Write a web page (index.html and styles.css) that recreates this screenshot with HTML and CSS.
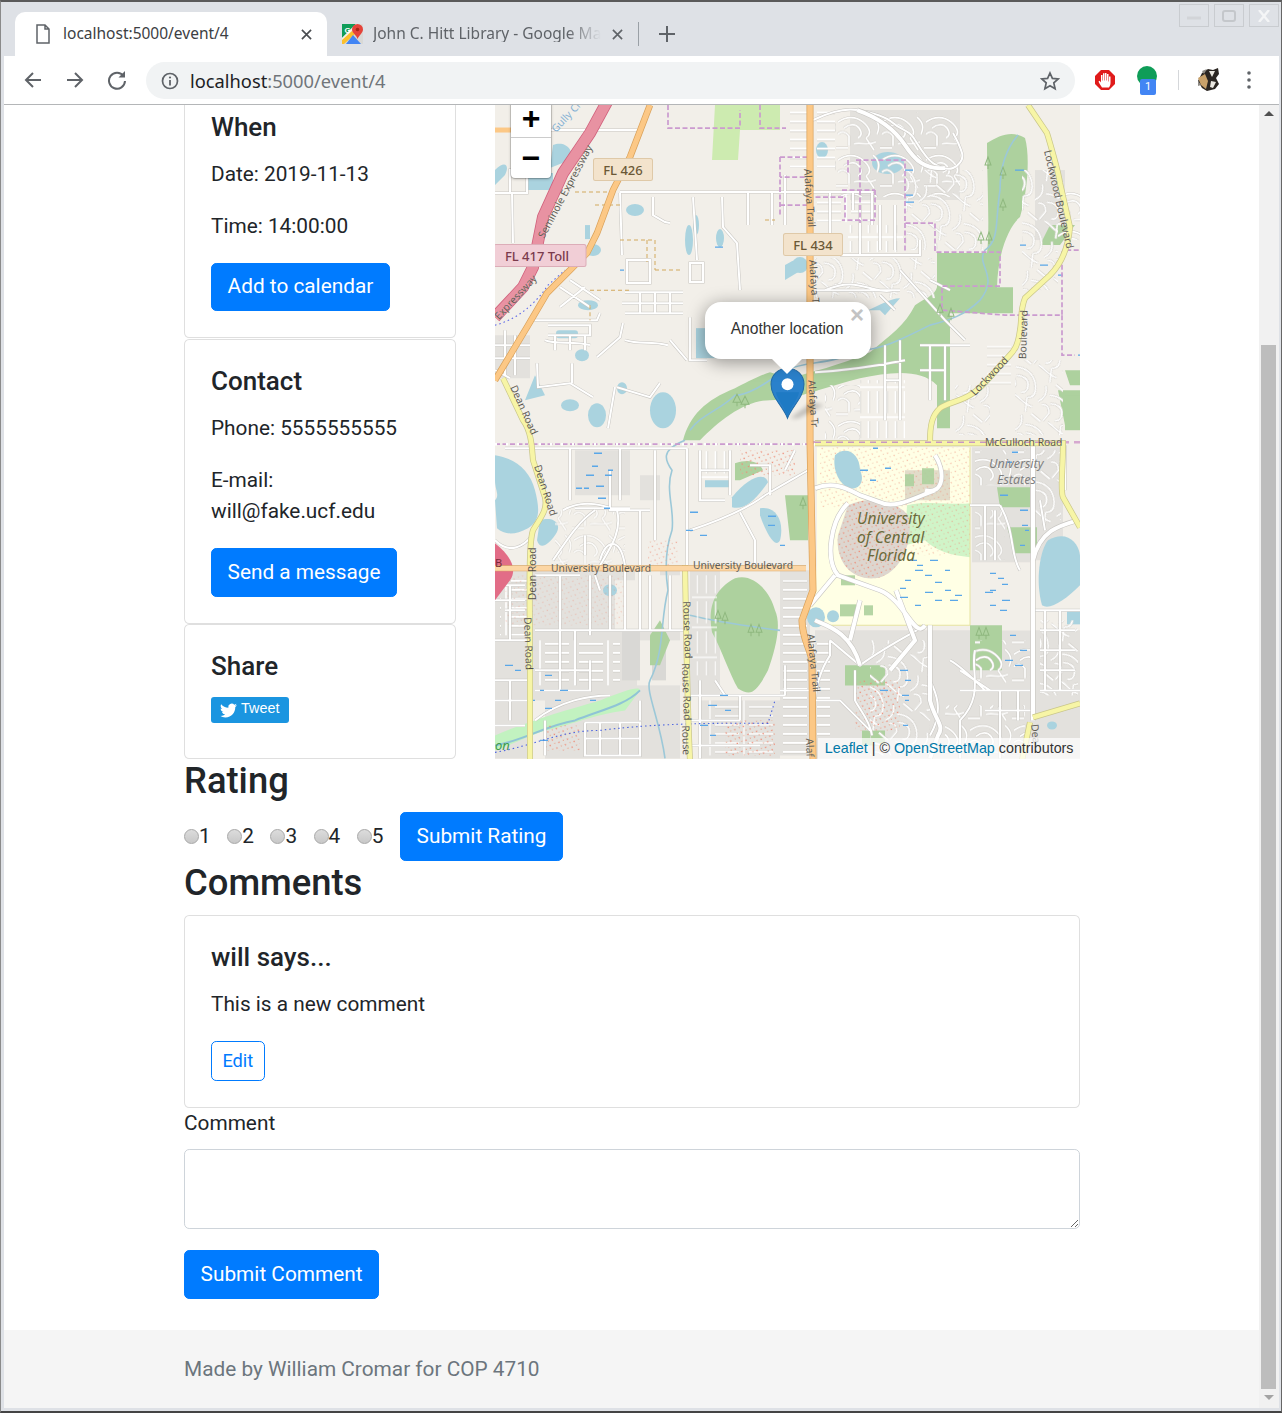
FILE: index.html
```html
<!DOCTYPE html>
<html>
  <head>
    <meta name="viewport" content="width=device-width,initial-scale=1.0">
    <title>Event</title>
    <link rel="stylesheet" href="styles.css">
  </head>
  <body>
    <div class="window">
      <div class="tabstrip">
        <div class="tab tab-active">
          <svg class="tab-icon" viewBox="0 0 16 20"><path d="M2 1h8l4 4v14H2z M10 1v4h4" fill="none" stroke="#5f6368" stroke-width="1.5"/></svg>
          <span class="tab-title">localhost:5000/event/4</span>
          <svg class="tab-close" viewBox="0 0 12 12"><path d="M1 1l10 10M11 1L1 11" stroke="#4a4d51" stroke-width="1.8"/></svg>
        </div>
        <div class="tab">
          <svg class="tab-icon-maps" viewBox="0 0 21 20">
            <rect width="21" height="20" fill="#d9d9d6"/>
            <path d="M0 0h14L0 14z" fill="#0f9d58"/>
            <path d="M0 14L14 0h3L0 18z" fill="#f4f1e6"/>
            <path d="M0 16L10 7l3 3L2 20H0z" fill="#fbc02d"/>
            <path d="M4 20l7-9 8 9z" fill="#4285f4"/>
            <path d="M15.500 0a5.500 5.500 0 015.500 5.500c0 3-3.500 5.500-5.500 9.500-1-4-5.500-6-5.500-9.500A5.500 5.500 0 0115.500 0z" fill="#e4433a"/>
            <circle cx="15.500" cy="5.500" r="1.800" fill="#a52714"/>
            <text class="maps-g" x="2.500" y="9">G</text>
          </svg>
          <span class="tab-title tab-title-faded">John C. Hitt Library - Google Maps</span>
          <svg class="tab-close" viewBox="0 0 12 12"><path d="M1 1l10 10M11 1L1 11" stroke="#5f6368" stroke-width="1.8"/></svg>
        </div>
        <div class="tab-sep"></div>
        <svg class="new-tab" viewBox="0 0 16 16"><path d="M8 0v16M0 8h16" stroke="#5f6368" stroke-width="2"/></svg>
        <div class="win-controls">
          <div class="win-btn"><svg viewBox="0 0 14 10"><path d="M0 7h14" stroke="#d2d4d8" stroke-width="3"/></svg></div>
          <div class="win-btn"><svg viewBox="0 0 14 12"><rect x="1" y="1" width="12" height="10" rx="2" fill="none" stroke="#c4c7cb" stroke-width="2"/></svg></div>
          <div class="win-btn"><svg viewBox="0 0 14 12"><path d="M2 0l10 12M12 0L2 12" stroke="#f4f5f6" stroke-width="2.4"/></svg></div>
        </div>
      </div>

      <div class="toolbar">
        <svg class="tool-icon" viewBox="0 0 20 20"><path d="M18 10H3M10 3l-7 7 7 7" fill="none" stroke="#5f6368" stroke-width="2"/></svg>
        <svg class="tool-icon" viewBox="0 0 20 20"><path d="M2 10h15M10 3l7 7-7 7" fill="none" stroke="#5f6368" stroke-width="2"/></svg>
        <svg class="tool-icon" viewBox="0 0 20 20"><path d="M16.500 6A8 8 0 1018 11" fill="none" stroke="#5f6368" stroke-width="2"/><path d="M18 1v6.500h-6.500z" fill="#5f6368"/></svg>
        <div class="omnibox">
          <svg class="info-icon" viewBox="0 0 18 18"><circle cx="9" cy="9" r="7.500" fill="none" stroke="#5f6368" stroke-width="1.7"/><path d="M9 8v5.500" stroke="#5f6368" stroke-width="1.8"/><circle cx="9" cy="5.500" r="1.100" fill="#5f6368"/></svg>
          <span class="url"><span class="url-host">localhost</span>:5000/event/4</span>
          <svg class="star-icon" viewBox="0 0 20 20"><path d="M10 2l2.400 5.400 5.800.6-4.400 3.900 1.300 5.800-5.100-3-5.100 3 1.300-5.800L1.800 8l5.800-.6z" fill="none" stroke="#5f6368" stroke-width="1.7"/></svg>
        </div>
        <svg class="ext-adblock" viewBox="0 0 20 20">
          <path d="M6 0h8l6 6v8l-6 6H6l-6-6V6z" fill="#e01b1b"/>
          <path d="M7 17.500C5.500 15 4 13 3.500 11.500l1.200-.8L6 12.500V5h1.500v5.500H8V3.200h1.500v7.300H10V3h1.500v7.500H12V4h1.500v7.500H14V6.500h1.500V13c0 2-1 3.500-1.500 4.500z" fill="#fff"/>
        </svg>
        <div class="ext-green"><span class="ext-dot"></span><span class="ext-badge">1</span></div>
        <div class="tool-sep"></div>
        <svg class="avatar" viewBox="0 0 26 26">
          <path d="M8 6l6-4 5 1 5-2 1 6-3 4 3 6-4 5-8 2-5-3-4-7z" fill="#2b2622"/>
          <path d="M4 11l7-4 3 7-2 8-5-4z" fill="#c8a16a"/>
          <path d="M15 4l6 0-3 6zM17 14l5 1-3 6-3-1z" fill="#ebe8e1"/>
          <path d="M8 4l5-2-3 5zM4 14l3 4-3 1z" fill="#8d8a84"/>
        </svg>
        <svg class="menu-dots" viewBox="0 0 4 18"><circle cx="2" cy="2" r="1.800" fill="#5f6368"/><circle cx="2" cy="9" r="1.800" fill="#5f6368"/><circle cx="2" cy="16" r="1.800" fill="#5f6368"/></svg>
      </div>

      <div class="viewport">
        <div class="page">
          <div class="content">
            <div class="event-row">
              <div class="side">
                <div class="card">
                  <h5 class="card-title">When</h5>
                  <p>Date: 2019-11-13</p>
                  <p>Time: 14:00:00</p>
                  <a class="btn btn-primary">Add to calendar</a>
                </div>
                <div class="card">
                  <h5 class="card-title">Contact</h5>
                  <p>Phone: 5555555555</p>
                  <p>E-mail:<br>will@fake.ucf.edu</p>
                  <a class="btn btn-primary">Send a message</a>
                </div>
                <div class="card">
                  <h5 class="card-title">Share</h5>
                  <div class="tweet-line">
                    <a class="tweet">
                      <svg viewBox="0 0 24 24"><path fill="#fff" d="M23.950 4.570a10 10 0 01-2.820.770 4.960 4.960 0 002.160-2.720c-.950.550-2 .960-3.120 1.180a4.920 4.920 0 00-8.380 4.480C7.690 8.100 4.070 6.130 1.640 3.160a4.820 4.820 0 00-.670 2.480c0 1.710.870 3.210 2.190 4.100a4.900 4.900 0 01-2.230-.620v.060a4.920 4.920 0 003.950 4.830 5 5 0 01-2.210.080 4.930 4.930 0 004.600 3.420A9.870 9.870 0 010 19.540a14 14 0 007.560 2.210c9.050 0 14-7.500 14-13.980 0-.210 0-.420-.020-.630a9.940 9.940 0 002.410-2.570z"/></svg>
                      <span>Tweet</span>
                    </a>
                  </div>
                </div>
              </div>

              <div class="map">
                <svg class="map-svg" viewBox="495 85 585 674" preserveAspectRatio="none">
                  <defs>
                    <pattern id="comb-h" width="34" height="9" patternUnits="userSpaceOnUse">
                      <path d="M1 5.700h24" stroke="#cfccc6" stroke-width=".8"/>
                      <path d="M1 4.500h24M30 0v9" stroke="#fff" stroke-width="1.600" fill="none"/>
                    </pattern>
                    <pattern id="comb-v" width="9" height="30" patternUnits="userSpaceOnUse">
                      <path d="M5.700 1v22" stroke="#cfccc6" stroke-width=".8"/>
                      <path d="M4.500 1v22M0 27h9" stroke="#fff" stroke-width="1.600" fill="none"/>
                    </pattern>
                    <pattern id="loops" width="44" height="38" patternUnits="userSpaceOnUse">
                      <g fill="none">
                        <path d="M2 8C10 2 20 2 27 8S36 20 30 24M8 14C14 9 20 10 23 14S26 22 22 24M2 20C6 16 10 18 13 22V32M18 30C24 28 32 32 40 28M37 3C43 8 44 14 41 20M0 34H12M30 24L38 36" stroke="#cfccc6" stroke-width="2.600"/>
                        <path d="M2 8C10 2 20 2 27 8S36 20 30 24M8 14C14 9 20 10 23 14S26 22 22 24M2 20C6 16 10 18 13 22V32M18 30C24 28 32 32 40 28M37 3C43 8 44 14 41 20M0 34H12M30 24L38 36" stroke="#fff" stroke-width="1.700"/>
                      </g>
                    </pattern>
                    <pattern id="loops-r" width="44" height="38" patternUnits="userSpaceOnUse" patternTransform="rotate(40)">
                      <g fill="none">
                        <path d="M2 8C10 2 20 2 27 8S36 20 30 24M8 14C14 9 20 10 23 14S26 22 22 24M2 20C6 16 10 18 13 22V32M18 30C24 28 32 32 40 28M37 3C43 8 44 14 41 20M0 34H12M30 24L38 36" stroke="#cfccc6" stroke-width="2.600"/>
                        <path d="M2 8C10 2 20 2 27 8S36 20 30 24M8 14C14 9 20 10 23 14S26 22 22 24M2 20C6 16 10 18 13 22V32M18 30C24 28 32 32 40 28M37 3C43 8 44 14 41 20M0 34H12M30 24L38 36" stroke="#fff" stroke-width="1.700"/>
                      </g>
                    </pattern>
                    <pattern id="dots-red" width="7" height="6" patternUnits="userSpaceOnUse" patternTransform="rotate(20)">
                      <circle cx="2" cy="2" r=".8" fill="#ee8a74"/>
                      <circle cx="5.500" cy="4.500" r=".7" fill="#e9a48c"/>
                    </pattern>
                    <path id="streets" d="M495 130H637 M620 192H873 M813 120C830 112 845 108 857 110S885 116 893 123S908 130 913 137S925 158 933 163S948 170 953 168S964 160 962 153S957 140 953 133
                      M653 197V215L665 222L670 223 M693 197L697 260 M690 263H703V282H690z M722 197L723 227L737 243L740 290 M620 193L622 255 M627 260H650V283H627z M622 303H683 M625 292H683 M625 313H683 M640 292V313M655 292V313M670 292V313
                      M533 320H597L600 313 M560 287L590 307M570 280L600 300M560 307L585 287 M690 317V360H707 M597 357L620 337L623 323 M617 387L650 397L660 383 M608 428L615 387 M537 363L538 387L570 383L593 397 M572 363V383 M512 193L513 243 M670 340L687 360
                      M510 170H527V193H510z M520 150V170 M495 193H510 M785 175V225 M830 192V240 M853 192V210 M872 192V225 M748 192V225 M772 192V225
                      M548 325H590V335H548 M555 335V350 M570 335V350 M585 335V350 M625 340C640 345 650 340 668 345 M545 340C555 345 575 340 590 345
                      M505 330V375M495 345H530M495 358H530M515 335V375 M495 370L510 378
                      M815 290H900 M840 255H920V240 M860 205V255 M880 205V250 M895 205V250
                      M825 290C860 275 870 295 895 290 M900 270L945 320L965 340 M880 295L895 310M930 280L950 290
                      M920 345H970M930 345V400M945 345V400 M920 370H945M900 340V420M885 345V420M885 380H900 M815 372C850 370 880 365 905 360
                      M505 448H687 M495 540C510 555 525 545 532 535
                      M570 448V500M620 448V500 M655 450V540 M610 470V510H650 M575 508H630 M563 510C580 500 600 503 617 510C622 530 612 545 600 565 M595 510C580 520 570 535 553 560 M585 555V535M600 560C605 540 620 535 625 565 M640 510V565
                      M687 448V565 M690 530C720 520 745 510 765 495C790 480 800 475 808 470 M740 512L755 540V565 M770 495V465H750 M785 470L795 450 M730 450V495 M700 470H730 M700 450V500H725
                      M495 585H525M495 600H525M495 640H530M510 585V640 M535 575H580M560 575V635M590 575V635M625 570V630M640 570V630M535 630H685M595 575L600 590M610 575V630M650 575V630M670 575V630 M505 610H525
                      M535 690H590L590 660 M535 670H590 M560 630V690M575 630V685 M535 720C560 700 590 695 610 695 M495 680H530M495 700H530M510 680V720M495 725H525 M585 722V755H640V722H585 M600 722V755M620 722V755M585 738H640 M545 720V755 M640 700V720
                      M690 695H785 M700 695V758 M690 720H740 M740 695V720 M690 745H760 M715 680L725 695M700 680V695 M785 665V695 M740 700V720
                      M830 640L860 665C880 650 900 640 925 625 M830 640V655C820 670 815 690 815 700M815 700H840L870 730 M855 670V700C860 710 870 720 872 735 M780 690H810
                      M930 630V680C935 690 945 710 930 735 M950 660C960 665 975 680 985 690 M960 670L990 690 M975 650C970 670 985 695 960 720V758M960 690H1030M1000 690V758M985 710H1035M1018 690V720
                      M1035 610H1080M1040 630H1075M1040 650H1075M1045 610V690M1060 610V690M1040 670H1075M1040 690H1080 M1065 445V490 M1040 500L1045 530 M970 505H1000M985 505V560M995 510V560 M1000 505C1015 530 1010 555 1020 570"/>
                    <path id="majors" d="M857 110C880 118 895 130 905 145S925 170 945 168 M815 488C835 480 850 490 860 495L880 502C895 510 920 495 935 490 M848 503C830 520 825 560 838 575L880 590C905 600 915 640 925 625 M925 490C945 495 945 470 935 455 M930 625V700C935 720 945 725 938 735L930 758 M860 600L850 640 M815 620C825 625 850 630 860 665 M896 590L915 640L890 670 M835 575L810 605 M1033 440V720 M1033 560C1040 530 1060 525 1078 520"/>
                  </defs>

                  <rect x="495" y="85" width="585" height="674" fill="#f2efe9"/>

                  <!-- residential zones -->
                  <g fill="#e3e1dd">
                    <path d="M850 110H960V200H850z"/>
                    <rect x="1035" y="170" width="30" height="70"/>
                    <path d="M575 450H630V495H575z M640 475H660V500H640z"/>
                    <path d="M495 570H680V700H495z"/>
                    <path d="M495 700H530V758H495z M545 695H680V758H545z"/>
                    <rect x="690" y="570" width="30" height="125"/>
                    <path d="M780 570H810V755H780z"/>
                    <path d="M815 630H1080V758H815z"/>
                    <path d="M972 447H1063V560H1030V600H972z"/>
                    <rect x="700" y="700" width="80" height="58"/>
                    <path d="M495 335H530V378H495z"/>
                  </g>
                  <rect x="635" y="567" width="25" height="63" fill="#f2efe9"/>
                  <rect x="615" y="580" width="20" height="50" fill="#f2efe9"/>
                  <rect x="660" y="575" width="25" height="55" fill="#f2efe9"/>
                  <rect x="637" y="640" width="48" height="45" fill="#f2efe9"/>
                  <rect x="972" y="562" width="60" height="68" fill="#f2efe9"/>
                  <rect x="622" y="630" width="18" height="50" fill="#d9d8d5"/>
                  <rect x="652" y="635" width="14" height="45" fill="#d9d8d5"/>

                  <!-- university -->
                  <path d="M817 447H970V625H815C805 600 815 590 817 565z" fill="#ffffe5"/>
                  <path d="M907 505C925 500 955 505 970 503V557C950 555 935 550 925 540L905 545z" fill="#d0f4c8"/>
                  <path d="M970 447V625" stroke="#e6e3a0" stroke-width="1"/>
                  <path d="M820 625H970" stroke="#e6e3a0" stroke-width="1"/>
                  <path d="M848 505C870 495 895 500 908 515C915 540 900 575 875 578C850 580 835 560 838 535z" fill="#ddd6cf"/>
                  <rect x="905" y="470" width="45" height="30" fill="#e2dcc9"/>
                  <path d="M848 505C870 495 895 500 908 515C915 540 900 575 875 578C850 580 835 560 838 535z" fill="url(#dots-red)"/>
                  <rect x="820" y="447" width="150" height="60" fill="url(#dots-red)" opacity=".5"/>
                  <rect x="910" y="505" width="60" height="50" fill="url(#dots-red)" opacity=".5"/>
                  <g fill="#add19e" opacity=".9">
                    <rect x="840" y="604" width="16" height="12"/><rect x="841" y="575" width="14" height="10"/><rect x="864" y="605" width="9" height="10"/>
                    <rect x="922" y="468" width="12" height="16"/><rect x="905" y="474" width="9" height="12"/>
                  </g>

                  <!-- parks -->
                  <g fill="#add19e">
                    <path d="M683 440C690 415 705 400 735 388C745 383 760 375 770 372L790 378C810 372 840 365 870 352C890 335 905 325 915 305C925 298 935 295 937 287V253H987C990 230 987 180 987 143C1000 135 1012 130 1025 138C1030 155 1028 190 1020 217C1010 225 998 250 997 287H1013V313H950V428H937V385C920 368 890 372 860 378C830 385 795 400 770 400C745 400 720 420 700 440z"/>
                    <path d="M1058 390H1080V425H1065z"/>
                    <path d="M1050 225H1075L1060 245H1040z M1065 370H1080V385H1070z"/>
                    <path d="M735 578C752 572 770 590 775 610C782 625 775 650 768 670C755 695 750 695 738 688C730 675 722 650 712 632C708 610 712 590 735 578z"/>
                    <path d="M735 463C750 458 760 462 763 470L740 480H735z M785 495H808V540H790z"/>
                    <path d="M970 625H1002V670H970z"/>
                    <path d="M845 665H885V685H845z M862 730H885V745H862z"/>
                    <path d="M997 487H1030V507H1000z M1007 527H1037V553H1015z"/>
                    <rect x="1065" y="395" width="15" height="35"/>
                    <path d="M650 635L660 620L670 640L660 665H650z"/>
                  </g>
                  <path d="M715 105H780V130H740L738 160H712z" fill="#cdebb0"/>
                  <path d="M495 735C530 720 565 710 600 700C625 690 640 685 640 690L625 710C590 715 570 725 545 730C530 735 510 745 495 750z" fill="#c2f2c0"/>

                  <!-- water -->
                  <g fill="#aad3df">
                    <path d="M495 455C515 458 530 470 535 490C540 510 540 520 528 528C515 535 505 535 497 528L495 500C500 495 495 490 495 480z"/>
                    <path d="M540 520C555 515 563 525 555 535C548 545 540 550 537 540z"/>
                    <path d="M732 497C750 475 765 472 768 482C755 500 745 510 732 507z"/>
                    <path d="M760 508C775 505 785 520 780 540C775 550 765 530 760 515z"/>
                    <path d="M835 455C845 445 860 452 860 470C865 480 860 490 850 488C840 485 832 470 835 455z"/>
                    <path d="M1048 540C1065 530 1078 540 1080 555V585C1065 600 1050 610 1042 605C1035 580 1040 550 1048 540z"/>
                    <ellipse cx="816" cy="617" rx="9" ry="10"/>
                    <ellipse cx="833" cy="616" rx="6" ry="6"/>
                    <path d="M696 328H727V358H696z"/>
                    <ellipse cx="597" cy="415" rx="9" ry="12"/><ellipse cx="663" cy="410" rx="13" ry="18"/><ellipse cx="570" cy="405" rx="9" ry="6"/>
                    <ellipse cx="888" cy="163" rx="16" ry="11"/><ellipse cx="822" cy="150" rx="6" ry="8"/>
                    <ellipse cx="800" cy="265" rx="8" ry="8"/><path d="M785 265C800 255 810 258 805 268L785 280z"/>
                    <path d="M868 310C880 305 890 298 900 298L885 315L880 310z"/>
                    <ellipse cx="593" cy="250" rx="8" ry="6"/><ellipse cx="588" cy="305" rx="10" ry="5"/><rect x="585" y="225" width="5" height="14"/><ellipse cx="689" cy="240" rx="4" ry="15"/><ellipse cx="696" cy="225" rx="3" ry="10"/><ellipse cx="720" cy="238" rx="4" ry="9"/><ellipse cx="635" cy="210" rx="9" ry="6"/>
                    <path d="M553 145C565 140 575 150 570 160L550 168z M527 173H553V190H527z"/>
                    <rect x="556" y="330" width="22" height="8" rx="3"/>
                    <path d="M495 170C505 160 510 165 505 175L495 185z M535 375L545 395L525 400z"/>
                    <ellipse cx="582" cy="355" rx="7" ry="6"/><ellipse cx="622" cy="388" rx="5" ry="6"/>
                    <ellipse cx="610" cy="590" rx="7" ry="6"/>
                    <rect x="705" y="480" width="25" height="7"/>
                    <rect x="1067" y="610" width="13" height="14"/>
                    <ellipse cx="1052" cy="725" rx="5" ry="4"/>
                  </g>
                  <!-- streams -->
                  <g fill="none" stroke="#9cc8d8" stroke-width="1.600">
                    <path d="M1018 135C1005 150 1000 170 1000 190C995 220 1000 240 985 250C975 265 1000 275 980 300C965 315 950 320 930 325C900 340 880 350 860 350C830 365 810 360 785 370C770 380 750 395 735 395C720 410 700 415 690 430"/>
                    <path d="M685 440C660 450 665 460 672 470C665 490 675 510 672 530C665 550 665 570 668 590C660 620 665 650 650 680C645 690 660 720 665 758"/>
                    <path d="M690 615C710 620 740 625 780 630"/>
                    <path d="M640 690C625 705 600 710 575 720C545 725 525 740 495 745" stroke="#8fc4d6" stroke-width="2"/>
                  </g>

                  <!-- street blocks -->
                  <rect x="835" y="112" width="125" height="85" fill="url(#loops)"/>
                  <rect x="1022" y="170" width="36" height="120" fill="url(#loops-r)"/>
                  <rect x="1058" y="190" width="22" height="50" fill="url(#loops)"/>
                  <rect x="905" y="170" width="78" height="80" fill="url(#loops-r)"/>
                  <rect x="815" y="258" width="120" height="40" fill="url(#loops-r)"/>
                  <rect x="848" y="225" width="55" height="27" fill="url(#comb-v)"/>
                  <rect x="815" y="195" width="60" height="27" fill="url(#comb-h)"/>
                  <rect x="790" y="108" width="45" height="60" fill="url(#comb-h)"/>
                  <rect x="860" y="380" width="45" height="58" fill="url(#comb-v)"/>
                  <rect x="825" y="385" width="35" height="55" fill="url(#loops)"/>
                  <rect x="1015" y="360" width="48" height="75" fill="url(#loops-r)"/>
                  <rect x="955" y="385" width="35" height="50" fill="url(#loops-r)"/>
                  <rect x="985" y="345" width="28" height="40" fill="url(#comb-h)" opacity=".7"/>
                  <rect x="700" y="450" width="30" height="28" fill="url(#comb-v)"/>
                  <rect x="975" y="450" width="55" height="35" fill="url(#loops)"/>
                  <rect x="975" y="510" width="30" height="50" fill="url(#loops)" opacity=".8"/>
                  <rect x="1035" y="450" width="26" height="75" fill="url(#loops-r)"/>
                  <rect x="555" y="510" width="70" height="55" fill="url(#loops)" opacity=".7"/>
                  <rect x="500" y="575" width="28" height="60" fill="url(#comb-h)"/>
                  <rect x="535" y="640" width="85" height="45" fill="url(#comb-h)"/>
                  <rect x="815" y="640" width="15" height="100" fill="url(#comb-h)"/>
                  <rect x="870" y="640" width="60" height="115" fill="url(#loops-r)"/>
                  <rect x="945" y="705" width="80" height="50" fill="url(#loops)"/>
                  <rect x="1040" y="620" width="38" height="75" fill="url(#loops-r)"/>
                  <rect x="975" y="640" width="55" height="45" fill="url(#loops)"/>
                  <rect x="780" y="580" width="28" height="175" fill="url(#comb-h)"/>
                  <rect x="692" y="575" width="25" height="100" fill="url(#comb-v)" opacity=".7"/>
                  <rect x="705" y="700" width="70" height="55" fill="url(#comb-h)" opacity=".7"/>
                  <rect x="855" y="680" width="45" height="50" fill="url(#dots-red)"/>
                  <rect x="505" y="575" width="120" height="50" fill="url(#dots-red)" opacity=".35"/>
                  <rect x="725" y="720" width="50" height="35" fill="url(#dots-red)"/>
                  <rect x="545" y="725" width="35" height="25" fill="url(#dots-red)"/>
                  <rect x="740" y="450" width="55" height="25" fill="url(#dots-red)"/>
                  <rect x="648" y="540" width="30" height="25" fill="url(#dots-red)" opacity=".6"/>
                  <use href="#streets" fill="none" stroke="#c8c6c2" stroke-width="3"/>
                  <use href="#streets" fill="none" stroke="#fff" stroke-width="2"/>
                  <use href="#majors" fill="none" stroke="#c8c6c2" stroke-width="5.200"/>
                  <use href="#majors" fill="none" stroke="#fff" stroke-width="4"/>

                  <!-- blue dashes, small drains -->
                  <path d="M594 453h8M592 466h6M586 475h8M596 486h8M605 475h7M584 488h5M576 488h6M598 498h8M604 508h6M608 470h5
                    M690 512h8M686 530h7M700 535h7M768 516h8M768 525h7M780 545h5
                    M910 560h7M915 570h8M905 580h6M917 565h6M925 575h7M935 582h7M945 590h6M925 592h8M900 597h8M935 600h7M915 605h6M950 600h8M900 588h6M930 560h8M955 595h7M945 570h5
                    M990 573h6M998 578h6M990 590h6M1002 584h6M985 592h8M1002 600h8M990 605h6M1000 610h7
                    M860 470h8M870 480h6M885 468h6M873 448h5M1020 510h8M1022 525h6M1020 545h5M1012 452h6M1007 462h5M1000 495h8
                    M1025 530h4M1010 635h6M1020 650h7M1015 665h8M1005 660h8
                    M715 247h8M620 270h4M590 700h6
                    M900 670h8M905 680h6M902 695h7M903 725h5M905 700h4M880 690h8M895 745h6
                    M505 665h8M515 670h6M540 690h4M545 675h7M560 690h8M555 700h6M530 700h5M545 708h7M540 740h8
                    M708 705h9M720 695h8M725 710h6M700 725h8M710 735h6
                    M1015 170h9M905 170h8M905 195h8M905 202h9M1020 245h6M1040 265h8M1058 275h5 M1078 355h5"
                    stroke="#5aa7e8" stroke-width="1.300" fill="none"/>

                  <!-- boundaries and tracks -->
                  <g fill="none" stroke="#cb9bcf" stroke-width="1.700" stroke-dasharray="5 2.500">
                    <path d="M668 105V128H740V110 M760 105V128H786 M780 157V215 M780 157H808C815 165 808 175 808 177H780 M808 197H845V220 M780 205H808"/>
                    <path d="M856 160H905V223H935V252H1000V286H942V310L1005 315H1062V252L1065 250H1080"/>
                    <path d="M848 160V175M860 160V223 M875 190V220H842M842 190H875 M905 223V252"/>
                    <path d="M495 444H810"/>
                    <path d="M1062 315L1062 355H1075"/>
                  </g>
                  <path d="M810 442H1080" stroke="#d6a8d0" stroke-width="2.500" stroke-dasharray="6 5" fill="none"/>
                  <path d="M495 444H815" stroke="#fff" stroke-width="2.400" stroke-dasharray="2 9" fill="none"/>
                  <g fill="none" stroke="#d2a95e" stroke-width="1" stroke-dasharray="4 3">
                    <path d="M575 192H617 M595 205H620 M620 240H655V270 M655 270H680 M647 240V262 M590 290H630 M590 305V320 M765 220H775"/>
                  </g>
                  <path d="M495 325C515 320 535 305 548 285L565 270" stroke="#5b66e8" stroke-width="1.100" stroke-dasharray="1.500 3" fill="none"/>
                  <path d="M495 752C535 745 560 730 600 730C640 725 690 722 768 723L775 700" stroke="#4b63e0" stroke-width="1.100" stroke-dasharray="1.500 3" fill="none"/>

                  <!-- secondary roads -->
                  <g fill="none" stroke="#c9c68a" stroke-width="6">
                    <path d="M503 378L523 420C532 432 532 450 533 460L545 497C548 510 540 518 533 530C528 545 530 600 530 673V760"/>
                    <path d="M685 565C686 620 687 700 690 760"/>
                    <path d="M1028 105L1047 133C1052 150 1058 170 1060 183L1070 227C1068 250 1060 265 1050 275L1025 298C1020 310 1022 320 1020 330C1018 345 1015 350 1008 357C995 370 985 385 973 393C960 402 948 402 940 408C932 415 930 425 930 442"/>
                    <path d="M815 443H1063C1063 470 1060 490 1063 497L1080 527 M1033 717L1080 703 M1030 722L1022 760"/>
                  </g>
                  <g fill="none" stroke="#f7f5a6" stroke-width="4.600">
                    <path d="M503 378L523 420C532 432 532 450 533 460L545 497C548 510 540 518 533 530C528 545 530 600 530 673V760"/>
                    <path d="M685 565C686 620 687 700 690 760"/>
                    <path d="M1028 105L1047 133C1052 150 1058 170 1060 183L1070 227C1068 250 1060 265 1050 275L1025 298C1020 310 1022 320 1020 330C1018 345 1015 350 1008 357C995 370 985 385 973 393C960 402 948 402 940 408C932 415 930 425 930 442"/>
                    <path d="M815 443H1063C1063 470 1060 490 1063 497L1080 527 M1033 717L1080 703 M1030 722L1022 760"/>
                  </g>
                  <path d="M815 442H1062" stroke="#c796c4" stroke-width="1.600" stroke-dasharray="6 5" fill="none"/>

                  <!-- primary roads -->
                  <path d="M495 543C510 555 518 568 510 580L495 600z" fill="#e26d87"/>
                  <path d="M495 568H806" stroke="#d9a868" stroke-width="6" fill="none"/>
                  <path d="M495 568H806" stroke="#fcd6a4" stroke-width="4.800" fill="none"/>
                  <path d="M650 105L630 157L613 190L597 233L587 253L547 293L527 327L495 380" fill="none" stroke="#d9a15a" stroke-width="6.600"/>
                  <path d="M650 105L630 157L613 190L597 233L587 253L547 293L527 327L495 380" fill="none" stroke="#fcc886" stroke-width="5.200"/>
                  <path d="M810 85V440L813 590L802 620C802 640 812 650 812 663L813 760" fill="none" stroke="#d9a15a" stroke-width="7"/>
                  <path d="M810 85V440L813 590L802 620C802 640 812 650 812 663L813 760" fill="none" stroke="#fcc886" stroke-width="5.600"/>
                  <path d="M495 130H517" stroke="#fcc886" stroke-width="5"/>
                  <path d="M608 100L590 133L563 173L543 217L533 267L523 287L495 317" fill="none" stroke="#d0607c" stroke-width="12"/>
                  <path d="M608 100L590 133L563 173L543 217L533 267L523 287L495 317" fill="none" stroke="#e892a2" stroke-width="10.400"/>

                  <!-- trees -->
                  <g class="trees" fill="none" stroke="#8fb87f" stroke-width="1">
                    <path d="M733 402l4 -8 4 8zM737 402v4M741 404l4 -8 4 8zM745 404v4"/>
                    <path d="M985 165l3-8 3 8zM988 165v4M1000 175l3-8 3 8zM1003 175v4 M1000 207l3-8 3 8zM1003 207v4 M978 240l3-8 3 8zM981 240v4M986 240l3-8 3 8zM989 240v4 M937 312l3-8 3 8zM940 312v4 M948 316l3-8 3 8zM951 316v4"/>
                    <path d="M715 618l3-8 3 8zM718 618v4M722 620l3-8 3 8zM725 620v4 M748 632l3-8 3 8zM751 632v4M756 632l3-8 3 8zM759 632v4 M976 635l3-8 3 8zM979 635v4M983 635l3-8 3 8zM986 635v4 M800 505l3-8 3 8zM803 505v4"/>
                  </g>

                  <!-- road shields -->
                  <g class="shield"><rect x="593.500" y="158.500" width="59" height="22" rx="2"/><text x="623" y="174.500">FL 426</text></g>
                  <g class="shield"><rect x="783.500" y="233.500" width="59" height="22" rx="2"/><text x="813" y="249.500">FL 434</text></g>
                  <g class="shield shield-toll"><rect x="494" y="244.500" width="92" height="22" rx="2"/><text x="537" y="260.500">FL 417 Toll</text></g>

                  <!-- road names -->
                  <g class="road-label">
                    <text transform="translate(544,239) rotate(-62)">Seminole Expressway</text>
                    <text transform="translate(499,320) rotate(-47)">Expressway</text>
                    <text class="water-label" transform="translate(556,133) rotate(-47)">Gully Cr</text>
                    <text transform="translate(804,169) rotate(86)">Alafaya Trail</text>
                    <text transform="translate(809,260) rotate(86)">Alafaya T</text>
                    <text transform="translate(808,380) rotate(86)">Alafaya Tr</text>
                    <text transform="translate(807,634) rotate(84)">Alafaya Trail</text>
                    <text transform="translate(806,738) rotate(88)">Alaf</text>
                    <text transform="translate(1044,151) rotate(77)">Lockwood Boulevard</text>
                    <text transform="translate(1026,359) rotate(-88)">Boulevard</text>
                    <text transform="translate(975,396) rotate(-46)">Lockwood</text>
                    <text transform="translate(510,387) rotate(66)">Dean Road</text>
                    <text transform="translate(534,466) rotate(72)">Dean Road</text>
                    <text transform="translate(536,600) rotate(-90)">Dean Road</text>
                    <text transform="translate(524,617) rotate(88)">Dean Road</text>
                    <text transform="translate(683,601) rotate(88)">Rouse Road</text>
                    <text transform="translate(682,663) rotate(88)">Rouse Road</text>
                    <text transform="translate(682,725) rotate(88)">Rouse</text>
                    <text x="551" y="572">University Boulevard</text>
                    <text x="693" y="569">University Boulevard</text>
                    <text x="985" y="446">McCulloch Road</text>
                    <text transform="translate(1031,724) rotate(84)">Dea</text>
                  </g>
                  <text class="place-label" x="989" y="468">University</text>
                  <text class="place-label" x="997" y="484">Estates</text>
                  <text class="campus-label" x="857" y="524">University</text>
                  <text class="campus-label" x="857" y="543">of Central</text>
                  <text class="campus-label" x="867" y="561">Florida</text>
                  <text class="park-label" x="495" y="750">on</text>
                  <text class="toll-label" x="495" y="567">B</text>

                  <!-- marker -->
                  <path class="marker-shadow" d="M790 418L812 402L824 405L798 418z"/>
                  <path d="M787.500 418C783 406 771 397 771 384C771 375 778 368 787.500 368S804 375 804 384C804 397 792 406 787.500 418z" fill="#2a81cb" stroke="#1f6aa8" stroke-width="1"/>
                  <path d="M787.500 416C784 406 777 399 776 392H799C798 399 791 406 787.500 416z" fill="#1e7ac4"/>
                  <circle cx="787.500" cy="384" r="6" fill="#fff"/>
                </svg>

                <div class="zoom-control">
                  <a class="zoom-btn">+</a>
                  <a class="zoom-btn">&#8722;</a>
                </div>

                <div class="popup">
                  <a class="popup-close">&#215;</a>
                  <div class="popup-text">Another location</div>
                  <div class="popup-tip"></div>
                </div>

                <div class="attribution"><a>Leaflet</a> | &copy; <a>OpenStreetMap</a> contributors</div>
              </div>
            </div>

            <h3 class="section-title">Rating</h3>
            <form class="rating">
              <label class="rate"><input type="radio" name="rating">1</label>
              <label class="rate"><input type="radio" name="rating">2</label>
              <label class="rate"><input type="radio" name="rating">3</label>
              <label class="rate"><input type="radio" name="rating">4</label>
              <label class="rate"><input type="radio" name="rating">5</label>
              <button type="button" class="btn btn-primary">Submit Rating</button>
            </form>

            <h3 class="section-title">Comments</h3>
            <div class="card">
              <h5 class="card-title">will says...</h5>
              <p>This is a new comment</p>
              <a class="btn btn-outline">Edit</a>
            </div>

            <form class="comment-form">
              <label class="comment-label">Comment</label>
              <textarea class="comment-input" rows="2"></textarea>
              <button type="button" class="btn btn-primary">Submit Comment</button>
            </form>
          </div>

          <footer class="footer">Made by William Cromar for COP 4710</footer>
        </div>

        <div class="scrollbar">
          <div class="scroll-arrow scroll-up"></div>
          <div class="scroll-thumb"></div>
          <div class="scroll-arrow scroll-down"></div>
        </div>
      </div>
    </div>
  </body>
</html>
```

FILE: styles.css
```css
html { font-size: 20.8px; }
body { margin: 0; font-family: Roboto, "Liberation Sans", sans-serif; color: #212529; line-height: 1.5; background: #fff; }
* { box-sizing: border-box; }

/* browser frame */
.window { width: 1282px; height: 1413px; display: flex; flex-direction: column; background: #dee1e6; border-top: 2px solid #5a5a5a; border-right: 1px solid #666; border-bottom: 2px solid #444; border-left: 1px solid #8a8a8a; padding: 0 2px 3px 3px; overflow: hidden; }

.tabstrip { height: 54px; flex: none; display: flex; align-items: flex-end; position: relative; font-family: "Noto Sans", sans-serif; }
.tab { height: 44px; display: flex; align-items: center; font-size: 15.5px; color: #5f6368; line-height: 1; }
.tab-active { width: 312px; margin-left: 11px; background: #fff; border-radius: 10px 10px 0 0; color: #3c4043; padding-left: 20px; }
.tab-icon { width: 16px; height: 20px; margin-right: 12px; }
.tab-icon-maps { width: 21px; height: 20px; margin-right: 10px; flex: none; }
.maps-g { font: bold 8px "Liberation Sans", sans-serif; fill: #fff; }
.tab-title { flex: 1; white-space: nowrap; overflow: hidden; }
.tab-title-faded { flex: none; width: 228px; -webkit-mask-image: linear-gradient(90deg, #000 85%, transparent 100%); mask-image: linear-gradient(90deg, #000 85%, transparent 100%); }
.tab-close { width: 11px; height: 11px; margin: 0 15px 0 10px; flex: none; }
.tab:not(.tab-active) { width: 296px; padding-left: 15px; }
.tab:not(.tab-active) .tab-close { margin: 0 0 0 11px; }
.tab-sep { width: 1px; height: 24px; background: #9aa0a6; margin: 0 0 10px 15px; }
.new-tab { width: 16px; height: 16px; margin: 0 0 14px 20px; }
.win-controls { position: absolute; top: 2px; right: 0; display: flex; gap: 5px; }
.win-btn { width: 30px; height: 23px; border: 1px solid #c9ccd0; display: flex; align-items: center; justify-content: center; }
.win-btn svg { width: 14px; height: 12px; }

.toolbar { height: 49px; flex: none; background: #fff; border-bottom: 1px solid #b4b6b8; display: flex; align-items: center; padding-left: 19px; }
.tool-icon { width: 20px; height: 20px; margin-right: 22px; }
.omnibox { width: 929px; height: 37px; margin-left: -3px; margin-top: 1px; border-radius: 19px; background: #f1f3f4; display: flex; align-items: center; padding: 0 15px; font-family: "Noto Sans", sans-serif; font-size: 18.3px; }
.info-icon { width: 18px; height: 18px; margin-right: 11px; }
.url { flex: 1; color: #70757a; white-space: nowrap; }
.url-host { color: #202124; }
.star-icon { width: 20px; height: 20px; }
.ext-adblock { width: 20px; height: 20px; margin-left: 20px; }
.ext-green { width: 28px; height: 28px; margin-left: 22px; position: relative; }
.ext-dot { position: absolute; left: 0; top: 0; width: 20px; height: 20px; background: #0f9d58; border-radius: 50%; }
.ext-badge { position: absolute; left: 3px; top: 13px; width: 16px; height: 16px; background: #4285f4; border-radius: 2px; color: #fff; font: 11px/16px Roboto, sans-serif; text-align: center; }
.tool-sep { width: 1px; height: 20px; background: #d5d7da; margin-left: 13px; }
.avatar { width: 26px; height: 26px; margin-left: 15px; }
.menu-dots { width: 4px; height: 18px; margin-left: 27px; }

.viewport { flex: 1; min-height: 0; display: flex; background: #fff; }
.page { flex: 1; min-width: 0; overflow: hidden; display: flex; flex-direction: column; }
.content { width: 896px; margin: -20.2px 0 0 180px; flex: none; }

.scrollbar { width: 20px; flex: none; background: #f1f1f1; display: flex; flex-direction: column; padding: 0 3px 0 2px; }
.scroll-arrow { height: 20px; flex: none; position: relative; }
.scroll-arrow::after { content: ""; position: absolute; left: 3px; border-left: 5px solid transparent; border-right: 5px solid transparent; }
.scroll-up::after { top: 6px; border-bottom: 5px solid #505050; }
.scroll-down::after { top: 6px; border-top: 5px solid #a3a3a3; }
.scroll-thumb { height: 1044px; margin-top: 220px; background: #bdbdbd; flex: none; }

/* page */
.event-row { display: grid; grid-template-columns: 272px 585px; column-gap: 39px; }
.side { display: flex; flex-direction: column; }
.side .card + .card { margin-top: .5px; }

.card { border: 1.3px solid rgba(0, 0, 0, 0.125); border-radius: .25rem; padding: 1.25rem; background: #fff; }
.card-title { margin: 0 0 .75rem; font-size: 1.25rem; font-weight: 500; line-height: 1.2; }
.card p { margin: 0 0 1rem; }

.btn { display: inline-block; font: inherit; line-height: 1.5; padding: .375rem .75rem; border: 1.3px solid transparent; border-radius: .25rem; vertical-align: middle; }
.btn-primary { background: #007bff; border-color: #007bff; color: #fff; }
.btn-outline { color: #007bff; border-color: #007bff; font-size: .875rem; padding: .25rem .5rem; }

.tweet-line { height: 35.4px; margin-top: -1px; }
.tweet { width: 78px; height: 26px; display: flex; align-items: flex-start; background: #1b95e0; border-radius: 3px; color: #fff; font: 14.4px/22px "Liberation Sans", sans-serif; padding: 0 0 0 9px; }
.tweet svg { width: 17px; height: 17px; margin: 5px 4px 0 0; flex: none; }

.section-title { margin: 0 0 9.4px; font-size: 1.75rem; font-weight: 500; line-height: 1.2; }
.rating + .section-title { margin-bottom: 10.4px; }
.rating { display: flex; align-items: center; }
.rate { display: flex; align-items: center; margin-right: 16.5px; }
.rate input { appearance: none; -webkit-appearance: none; width: 15px; height: 15px; margin: 0; border-radius: 50%; border: 1px solid #a8a8a8; background: linear-gradient(#dcdcdc, #c8c8c8); }

.comment-form { display: flex; flex-direction: column; align-items: flex-start; }
.comment-label { margin-bottom: .5rem; }
.comment-input { width: 100%; height: 80px; margin-bottom: 1rem; border: 1.3px solid #ced4da; border-radius: .25rem; background: #fff; }

.footer { margin-top: 31px; flex: 1; min-height: 78px; background: #f5f5f5; color: #6c757d; display: flex; align-items: center; padding: 2px 0 0 180px; }

/* map */
.map { position: relative; overflow: hidden; background: #f2efe9; font-family: "Liberation Sans", sans-serif; }
.map-svg { position: absolute; left: 0; top: 0; width: 100%; height: 100%; display: block; }
.shield rect { fill: #f3e3cc; stroke: #dfc9a8; stroke-width: 1; }
.shield text { font: 500 13px "Noto Sans", sans-serif; fill: #6b5836; text-anchor: middle; }
.shield-toll rect { fill: #f1ced6; stroke: #dcadb8; }
.shield-toll text { fill: #7a3a4c; }
.road-label text { font: 10.3px "Noto Sans", sans-serif; fill: #3e3a30; stroke: rgba(255, 255, 255, .35); stroke-width: .4; }
.road-label .water-label { fill: #6a9fc9; }
.place-label { font: italic 12.5px "Noto Sans", sans-serif; fill: #7f7f7f; }
.campus-label { font: italic 15.5px "Noto Sans", sans-serif; fill: #6a6a3a; }
.park-label { font: italic 13px "Noto Sans", sans-serif; fill: #3f9a4f; }
.toll-label { font: 11px "Noto Sans", sans-serif; fill: #7a2a3a; }
.marker-shadow { fill: #000; opacity: .2; filter: blur(2px); }

.zoom-control { position: absolute; left: 16px; top: 13.2px; width: 40px; background: #fff; border-radius: 4px; box-shadow: 0 0 0 1px rgba(0, 0, 0, .12), 0 1px 3px rgba(0, 0, 0, .3); font-family: "Liberation Sans", sans-serif; }
.zoom-btn { display: block; height: 40px; line-height: 40px; text-align: center; font-size: 32px; font-weight: bold; color: #000; border-bottom: 1px solid #ccc; }
.zoom-btn:last-child { height: 40px; border-bottom: 0; border-radius: 0 0 4px 4px; }

.popup { position: absolute; left: 210px; top: 217.2px; width: 166px; height: 57px; background: #fff; border-radius: 16px; box-shadow: 0 3px 18px rgba(0, 0, 0, .4); }
.popup-text { text-align: center; font-size: 15.6px; line-height: 53px; color: #333; padding-right: 2px; }
.popup-close { position: absolute; right: 7px; top: 3px; font-size: 24px; line-height: 20px; font-weight: bold; color: #c3c3c3; font-family: "Liberation Sans", sans-serif; }
.popup-tip { position: absolute; left: 66px; bottom: -15px; width: 0; height: 0; border-left: 16px solid transparent; border-right: 16px solid transparent; border-top: 16px solid #fff; }

.attribution { position: absolute; right: 0; bottom: 0; background: rgba(255, 255, 255, .7); font-size: 14.3px; line-height: 21px; color: #333; padding: 0 6.5px; }
.attribution a { color: #0078a8; }
```
